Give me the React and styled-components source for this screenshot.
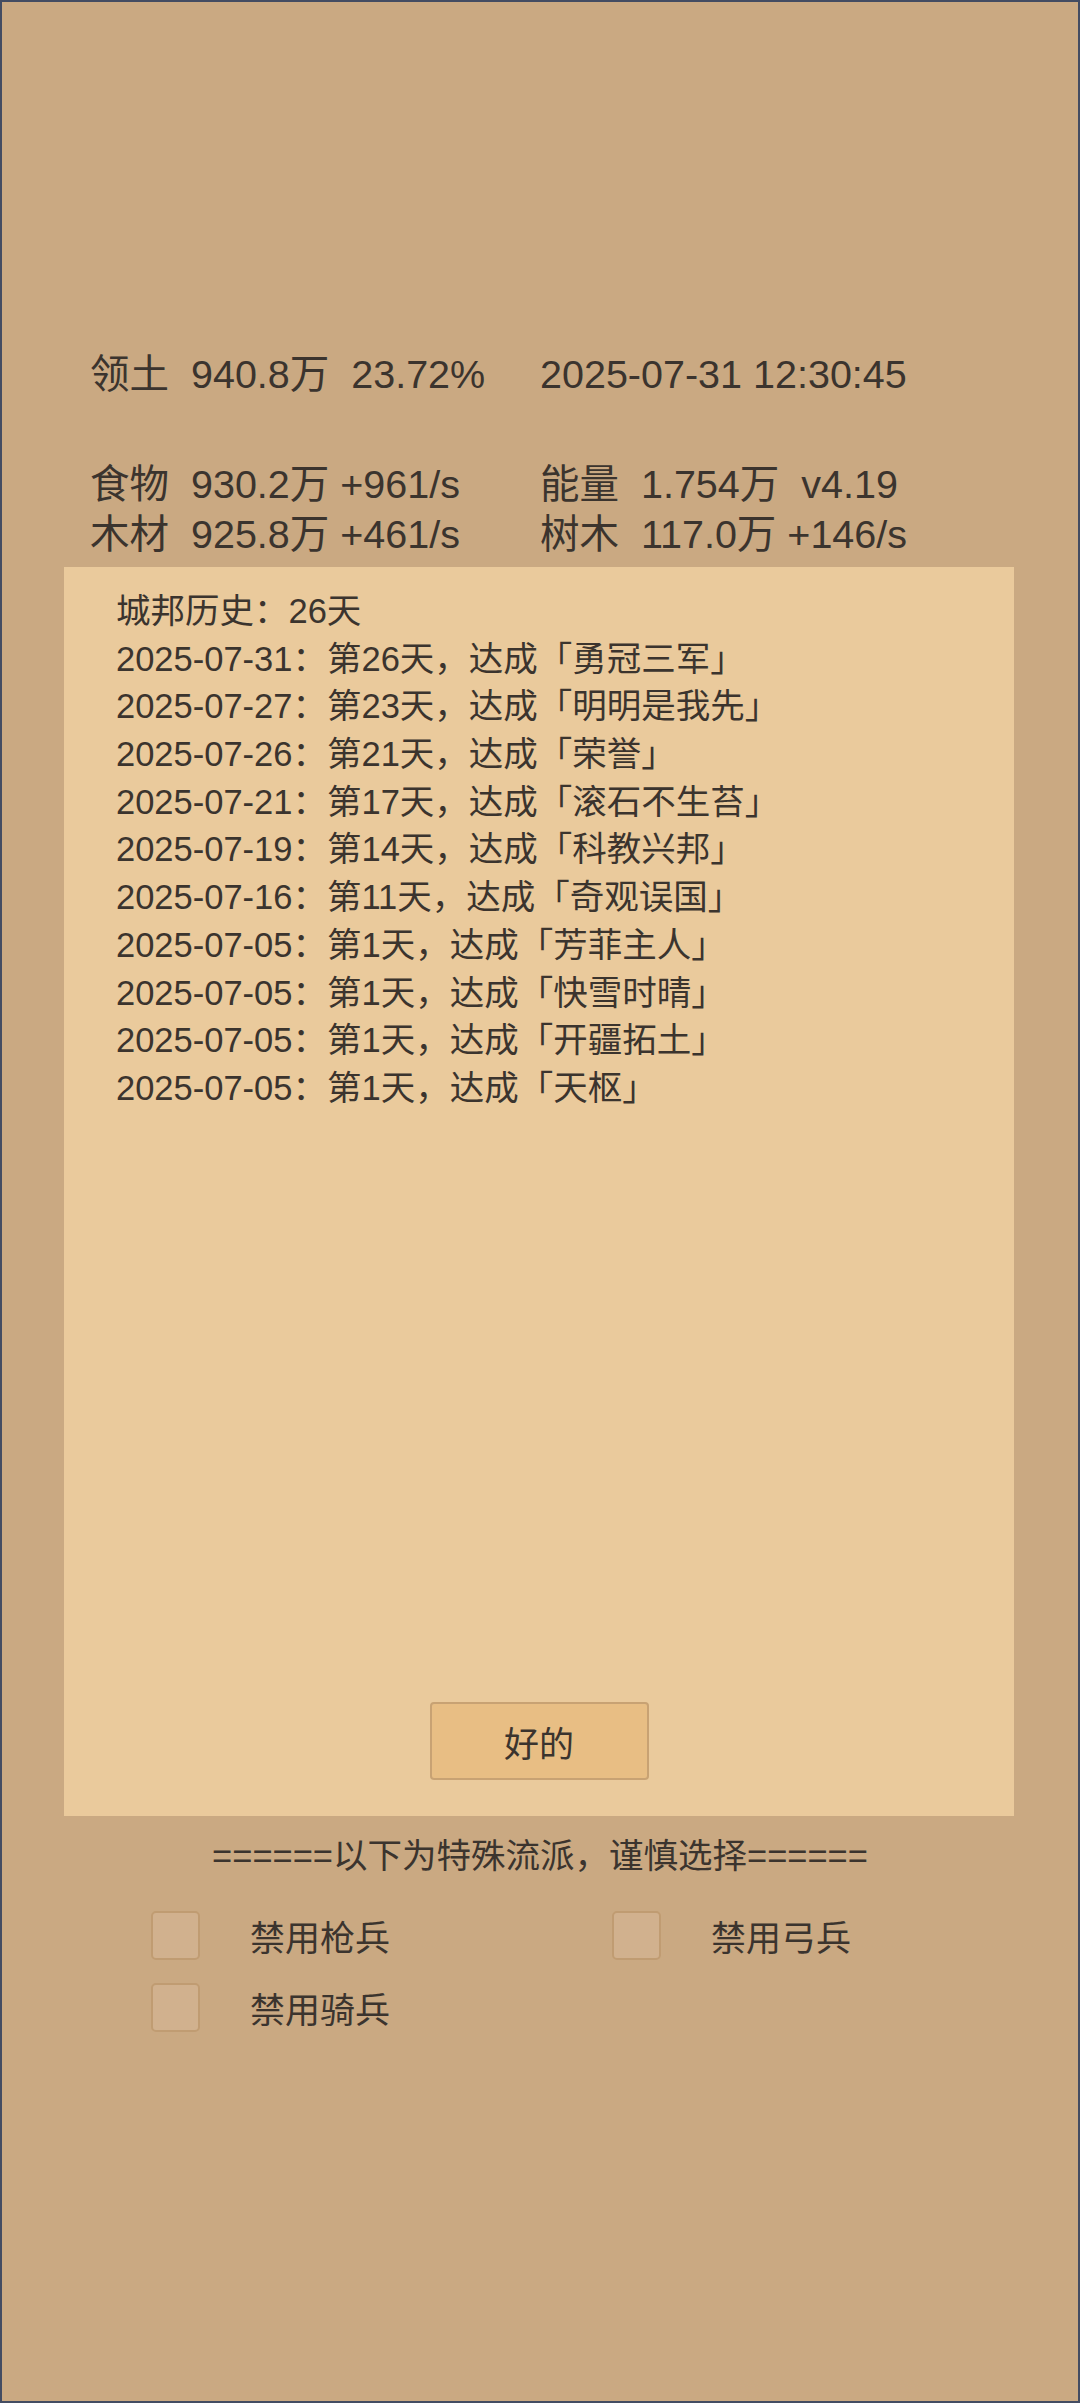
import React from 'react';
import styled, {createGlobalStyle} from 'styled-components';

const GlobalStyle = createGlobalStyle`
  html, body {
    margin: 0;
    padding: 0;
    background: #caa982;
  }
  body {
    font-family: "Liberation Sans", "Noto Sans CJK SC", sans-serif;
    color: #3b342e;
  }
`;

const stats = [
    ['食物  930.2万 +961/s', '能量  1.754万  v4.19'],
    ['木材  925.8万 +461/s', '树木  117.0万 +146/s'],
];

const history = [
    ['2025-07-31', 26, '勇冠三军'],
    ['2025-07-27', 23, '明明是我先'],
    ['2025-07-26', 21, '荣誉'],
    ['2025-07-21', 17, '滚石不生苔'],
    ['2025-07-19', 14, '科教兴邦'],
    ['2025-07-16', 11, '奇观误国'],
    ['2025-07-05', 1, '芳菲主人'],
    ['2025-07-05', 1, '快雪时晴'],
    ['2025-07-05', 1, '开疆拓土'],
    ['2025-07-05', 1, '天枢'],
];

const options = ['禁用枪兵', '禁用弓兵', '禁用骑兵'];

const App = () => {
    return (
        <Screen>
            <GlobalStyle/>
            <StatusGrid $top="347px">
                <StatusCell>领土  940.8万  23.72%</StatusCell>
                <StatusCell>2025-07-31 12:30:45</StatusCell>
            </StatusGrid>
            <StatusGrid $top="60px">
                {stats.map(([left, right]) => (
                    <React.Fragment key={left}>
                        <StatusCell>{left}</StatusCell>
                        <StatusCell>{right}</StatusCell>
                    </React.Fragment>
                ))}
            </StatusGrid>
            <Panel>
                <HistoryList>
                    <HistoryLine>城邦历史：26天</HistoryLine>
                    {history.map(([date, day, title], i) => (
                        <HistoryLine key={i}>
                            {date}：第{day}天，达成「{title}」
                        </HistoryLine>
                    ))}
                </HistoryList>
                <OkButton>好的</OkButton>
            </Panel>
            <Divider>======以下为特殊流派，谨慎选择======</Divider>
            <OptionGrid>
                {options.map(name => (
                    <Option key={name}>
                        <CheckBox/>
                        <OptionLabel>{name}</OptionLabel>
                    </Option>
                ))}
            </OptionGrid>
        </Screen>
    );
};

const Screen = styled.div`
      box-sizing: border-box;
      width: 1080px;
      min-height: 2403px;
      border: 2px solid #434c62;
      background: #caa982;
      display: flex;
      flex-direction: column;
`;

const StatusGrid = styled.div`
      display: grid;
      grid-template-columns: 450px 450px;
      grid-auto-rows: 50px;
      padding: 0 88px;
      margin-top: ${p => p.$top};
`;

const StatusCell = styled.div`
      font-size: 39.5px;
      line-height: 50px;
      white-space: pre;
`;

const Panel = styled.div`
      box-sizing: border-box;
      margin: 8px 0 0 62px;
      width: 950px;
      height: 1249px;
      background: #eaca9c;
      padding: 21px 52px 36px;
      display: flex;
      flex-direction: column;
`;

const HistoryList = styled.div`
      flex: 1;
`;

const HistoryLine = styled.div`
      font-size: 34.5px;
      height: 47.7px;
      line-height: 47.7px;
      white-space: pre;
`;

const OkButton = styled.button`
      align-self: center;
      width: 219px;
      height: 78px;
      background: #e8be84;
      border: 2px solid #c8a273;
      border-radius: 4px;
      font-family: inherit;
      font-size: 35px;
      color: #3b342e;
      cursor: pointer;
`;

const Divider = styled.div`
      margin-top: 16px;
      text-align: center;
      font-size: 34.5px;
      line-height: 48px;
      white-space: pre;
`;

const OptionGrid = styled.div`
      display: grid;
      grid-template-columns: 461px 1fr;
      grid-auto-rows: 72px;
      padding: 19px 0 0 149px;
`;

const Option = styled.label`
      display: flex;
      align-items: center;
      gap: 50px;
      cursor: pointer;
`;

const CheckBox = styled.span`
      box-sizing: border-box;
      width: 49px;
      height: 49px;
      background: #d1b18e;
      border: 2px solid #c09c72;
      border-radius: 5px;
`;

const OptionLabel = styled.span`
      font-size: 35px;
`;

export default App;
